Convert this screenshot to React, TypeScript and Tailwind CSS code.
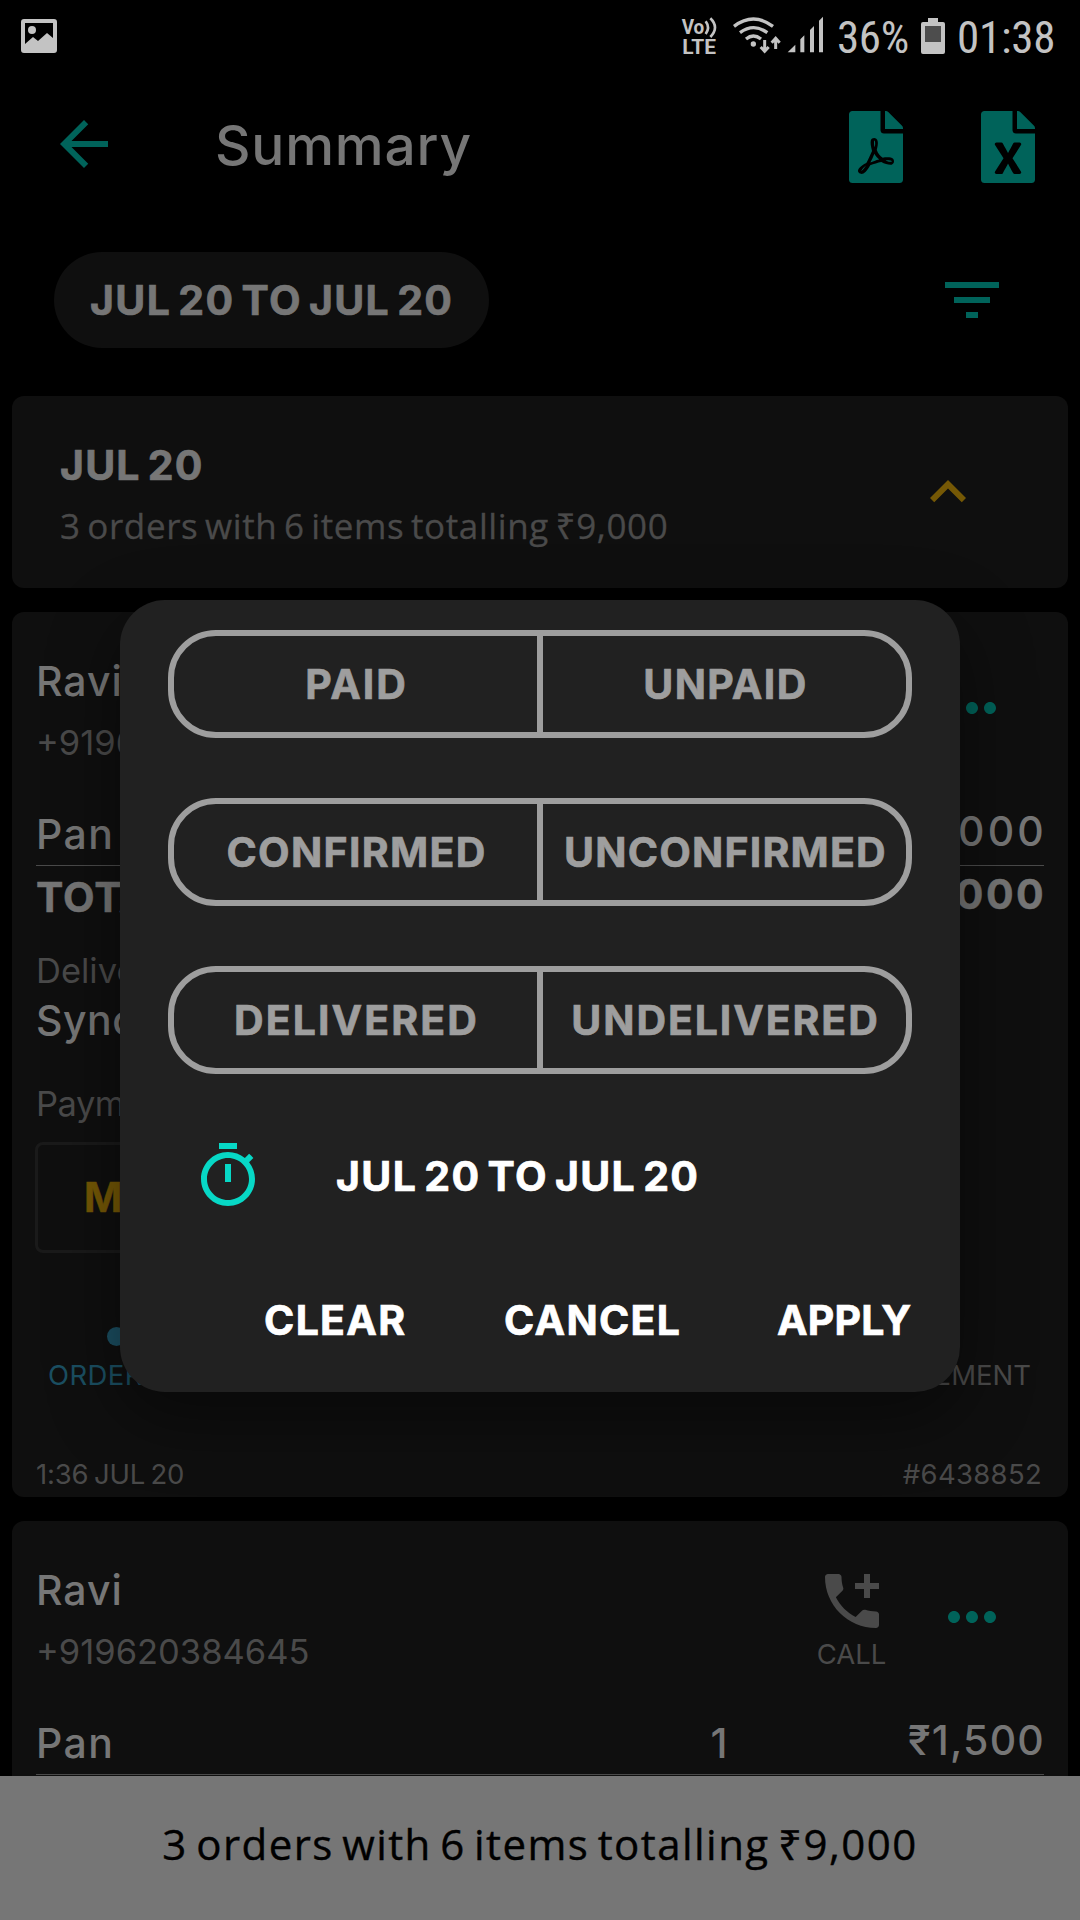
import React from 'react';
import { FaFilePdf, FaFileExcel } from 'react-icons/fa';

function Glyph({ d, className }: { d: string; className: string }) {
  return (
    <svg viewBox="0 0 24 24" className={`size-[72px] shrink-0 fill-current ${className}`}>
      <path d={d} />
    </svg>
  );
}

const icons = {
  back: 'M20 11H7.83l5.59-5.59L12 4l-8 8 8 8 1.41-1.41L7.83 13H20v-2z',
  filter: 'M10 18h4v-2h-4v2zM3 6v2h18V6H3zm3 7h12v-2H6v2z',
  up: 'M12 8l-6 6 1.41 1.41L12 10.83l4.59 4.58L18 14z',
  more: 'M6 10c-1.1 0-2 .9-2 2s.9 2 2 2 2-.9 2-2-.9-2-2-2zm12 0c-1.1 0-2 .9-2 2s.9 2 2 2 2-.9 2-2-.9-2-2-2zm-6 0c-1.1 0-2 .9-2 2s.9 2 2 2 2-.9 2-2-.9-2-2-2z',
  call: 'M20 15.5c-1.25 0-2.45-.2-3.57-.57-.35-.11-.74-.03-1.02.24l-2.2 2.2c-2.83-1.44-5.15-3.75-6.59-6.59l2.2-2.21c.28-.26.36-.65.25-1C8.7 6.45 8.5 5.25 8.5 4c0-.55-.45-1-1-1H4c-.55 0-1 .45-1 1 0 9.39 7.61 17 17 17 .55 0 1-.45 1-1v-3.5c0-.55-.45-1-1-1zM21 6h-3V3h-2v3h-3v2h3v3h2V8h3z',
  timer: 'M15 1H9v2h6V1zm-4 13h2V8h-2v6zm8.03-6.61l1.42-1.42c-.43-.51-.9-.99-1.41-1.41l-1.42 1.42C16.07 4.74 14.12 4 12 4c-4.97 0-9 4.03-9 9s4.02 9 9 9 9-4.03 9-9c0-2.12-.74-4.07-1.97-5.61zM12 20c-3.87 0-7-3.13-7-7s3.13-7 7-7 7 3.13 7 7-3.13 7-7 7z',
};

function StatusBar() {
  return (
    <div className="flex h-[72px] items-start text-[#c3c3c3]">
      <svg viewBox="0 0 36 34" className="mt-[19px] ml-[21px] h-[34px] w-9">
        <path
          fill="currentColor"
          fillRule="evenodd"
          d="M3 0h30a3 3 0 0 1 3 3v28a3 3 0 0 1-3 3H3a3 3 0 0 1-3-3V3a3 3 0 0 1 3-3zM4 4v21l8-7 5 4 9-8 6 5V4z"
        />
        <circle cx="11" cy="11" r="4" fill="currentColor" />
      </svg>
      <svg viewBox="33 18 111 117" className="mt-4 ml-auto h-[39px] w-[37px] font-['Roboto'] font-bold">
        <g fill="currentColor">
          <text x="35" y="71" fontSize="58" textLength="68" lengthAdjust="spacingAndGlyphs">Vo</text>
          <text x="37" y="131" fontSize="61" textLength="101" lengthAdjust="spacingAndGlyphs">LTE</text>
        </g>
        <g fill="none" stroke="currentColor" strokeWidth="8">
          <path d="M107 34q14 19 0 38" />
          <path d="M121 25q28 27 0 56" />
        </g>
      </svg>
      <svg viewBox="186 18 150 114" className="mt-4 ml-3.5 h-[38px] w-[50px]">
        <g fill="none" stroke="currentColor" strokeWidth="10">
          <path d="M192 49q58-44 117 0" />
          <path d="M210 68q41-30 82 0" />
          <path d="M228 87q22-18 45 0" />
          <path d="M284 90v32M272 111l12 13 12-13" strokeWidth="9" />
          <path d="M317 117V86M305 98l12-13 12 13" strokeWidth="9" />
        </g>
        <circle cx="250" cy="102" r="8" fill="currentColor" />
      </svg>
      <svg viewBox="351 20 111 111" className="mt-4 ml-[5px] size-[37px] fill-current">
        <path d="M353 129l23-23v23zM391 129V90l12-12v51zM420 129V62l12-12v79zM447 129V34l12-12v107z" />
      </svg>
      <span className="mt-[11px] ml-[13px] w-[84px] font-['Roboto',sans-serif] text-[45px] leading-[53px] tracking-[-0.4px] whitespace-nowrap [font-stretch:75%]">
        36%
      </span>
      <svg viewBox="0 0 24 36" className="mt-[18px] h-9 w-6">
        <path fill="currentColor" d="M7 0h10v4h5a2 2 0 0 1 2 2v28a2 2 0 0 1-2 2H2a2 2 0 0 1-2-2V6a2 2 0 0 1 2-2h5z" />
        <path fill="#4d4d4d" d="M4 8h16v16H4z" />
      </svg>
      <span className="mt-[11px] ml-3 w-[123px] font-['Roboto',sans-serif] text-[45px] leading-[53px] tracking-[-0.2px] whitespace-nowrap [font-stretch:75%]">
        01:38
      </span>
    </div>
  );
}

function OrderHeader() {
  return (
    <div className="flex h-[106px] items-start">
      <div className="flex-1">
        <div className="text-[41px] leading-[50px] font-medium tracking-[1px] text-[#767676]">Ravi</div>
        <div className="mt-4 text-[34.5px] leading-[42px] text-[#4a4a4a]">+919620384645</div>
      </div>
      <div className="flex w-[72px] flex-col items-center text-[#4a4a4a]">
        <Glyph d={icons.call} className="" />
        <div className="-ml-px text-[27.5px] leading-[34px]">CALL</div>
      </div>
      <Glyph d={icons.more} className="mt-4 mr-[60px] ml-12 text-[#00635a]" />
    </div>
  );
}

function ItemRow({ qty, amount, spacing }: { qty: string; amount: string; spacing: string }) {
  return (
    <div className="mt-[46px] flex h-[50px] text-[41px] leading-[52px] font-medium text-[#767676]">
      <span className="flex-1 tracking-[1.4px]">Pan</span>
      <span className="w-[60px] text-center">{qty}</span>
      <span className={`-mt-[3px] w-[296px] text-right ${spacing}`}>{amount}</span>
    </div>
  );
}

function Segment({ left, right, leftSpacing, rightSpacing }: { left: string; right: string; leftSpacing: string; rightSpacing: string }) {
  return (
    <div className="grid h-[108px] grid-cols-2 rounded-[48px] border-6 border-[#9e9e9e] text-[#9e9e9e]">
      <div className={`flex items-center justify-center border-r-3 border-[#9e9e9e] pl-0.5 ${leftSpacing}`}>{left}</div>
      <div className={`flex items-center justify-center border-l-3 border-[#9e9e9e] pl-0.5 ${rightSpacing}`}>{right}</div>
    </div>
  );
}

function FilterDialog() {
  return (
    <div className="absolute inset-0 flex items-start justify-center pt-[600px]">
      <div className="h-[792px] w-[840px] rounded-[45px] bg-[#212121] px-12 pt-[30px] text-[41px] leading-[50px] font-bold text-white shadow-[0_24px_72px_rgba(0,0,0,0.45)] [-webkit-text-stroke:0.7px]">
        <div className="flex flex-col gap-[60px]">
          <Segment left="PAID" right="UNPAID" leftSpacing="tracking-[1.9px]" rightSpacing="tracking-[1.4px]" />
          <Segment left="CONFIRMED" right="UNCONFIRMED" leftSpacing="tracking-[1.3px]" rightSpacing="tracking-[1.2px]" />
          <Segment left="DELIVERED" right="UNDELIVERED" leftSpacing="tracking-[2.1px]" rightSpacing="tracking-[1.9px]" />
        </div>
        <div className="mt-[66px] flex items-center pl-6">
          <Glyph d={icons.timer} className="text-[#07d8c6]" />
          <span className="ml-[72px] tracking-[1.35px] [word-spacing:-4px]">JUL 20 TO JUL 20</span>
        </div>
        <div className="mt-[83px] flex pl-24">
          <span className="w-60 tracking-[1.3px]">CLEAR</span>
          <span className="w-[273px] tracking-[1.3px]">CANCEL</span>
          <span className="tracking-[0.2px]">APPLY</span>
        </div>
      </div>
    </div>
  );
}

export default function App() {
  return (
    <div className="relative flex h-[1920px] w-[1080px] flex-col overflow-hidden bg-black font-['Inter','Noto_Sans',sans-serif]">
      <StatusBar />

      <header className="flex h-36 items-center pl-12">
        <Glyph d={icons.back} className="text-[#00635a]" />
        <h1 className="ml-[95px] flex-1 pt-px text-[55px] leading-[66px] font-medium tracking-[0.8px] text-[#767676]">Summary</h1>
        <div className="mt-1.5 mr-[45px] flex gap-[78px] text-[#00635a]">
          <FaFilePdf className="h-[72px] w-[54px]" />
          <FaFileExcel className="h-[72px] w-[54px]" />
        </div>
      </header>

      <div className="flex h-[168px] items-center justify-between pr-[72px] pl-[54px]">
        <div className="flex h-24 w-[435px] items-center rounded-[48px] bg-[#0f0f0f] pt-px pl-9 text-[41px] font-bold tracking-[1.35px] whitespace-nowrap text-[#767676] [-webkit-text-stroke:0.7px] [word-spacing:-4px]">
          JUL 20 TO JUL 20
        </div>
        <Glyph d={icons.filter} className="text-[#00635a]" />
      </div>

      <main className="flex flex-1 flex-col gap-6 overflow-hidden px-3 pt-3">
        <section className="flex h-48 shrink-0 items-center justify-between rounded-xl bg-[#0f0f0f] pr-[84px] pl-12">
          <div className="mt-[3px]">
            <div className="text-[41px] leading-[50px] font-bold tracking-[1.2px] text-[#767676] [-webkit-text-stroke:0.7px] [word-spacing:-4px]">JUL 20</div>
            <div className="mt-[15px] font-['Open_Sans','Noto_Sans',sans-serif] text-[35px] leading-[42px] tracking-[0.6px] text-[#4a4a4a] [-webkit-text-stroke:0.3px] [word-spacing:-3px]">
              3 orders with 6 items totalling ₹9,000
            </div>
          </div>
          <Glyph d={icons.up} className="text-[#755805]" />
        </section>

        <section className="h-[885px] shrink-0 rounded-xl bg-[#0f0f0f] pt-11 pl-6">
          <OrderHeader />
          <ItemRow qty="4" amount="₹6,000" spacing="mr-[21px] tracking-[3.2px]" />
          <div className="mt-[7px] mr-6 h-px bg-[#4a4a4a]" />
          <div className="mt-[5px] flex h-[50px] justify-between text-[41px] leading-[52px] font-bold text-[#767676] [-webkit-text-stroke:0.5px]">
            <span className="tracking-[1px]">TOTAL</span>
            <span className="-mt-[3px] mr-[22px] tracking-[2.4px]">₹6,000</span>
          </div>
          <div className="mt-[29px] text-[34.5px] leading-[42px] text-[#4a4a4a]">Delivery</div>
          <div className="mt-[3px] text-[41px] leading-[50px] font-medium tracking-[0.5px] text-[#767676]">Sync</div>
          <div className="mt-[38px] text-[34.5px] leading-[42px] tracking-[-0.5px] text-[#4a4a4a]">Payment</div>
          <div className="mt-[17px] -ml-px flex h-[111px] w-[360px] items-center rounded-lg border-3 border-[#1a1a1a] pl-[46px] text-[41px] font-bold text-[#755805] [-webkit-text-stroke:0.5px]">
            MARK PAID
          </div>
          <div className="mt-[74px] ml-[71px] size-[19px] rounded-full bg-[#1b4f62]" />
          <div className="mt-[12px] flex h-[34px] justify-between pr-[37px] pl-[12px] text-[27.5px] leading-[34px] text-[#4a4a4a]">
            <span className="tracking-[0.4px] text-[#1b4f62]">ORDERED</span>
            <span>SETTLEMENT</span>
          </div>
          <div className="mt-[65px] flex justify-between pr-[26px] text-[27.5px] leading-[34px] text-[#4a4a4a]">
            <span className="tracking-[-0.2px] [word-spacing:-2px]">1:36 JUL 20</span>
            <span className="tracking-[0.3px]">#6438852</span>
          </div>
        </section>

        <section className="flex-1 rounded-t-xl bg-[#0f0f0f] pt-11 pl-6">
          <OrderHeader />
          <ItemRow qty="1" amount="₹1,500" spacing="mr-[23px] tracking-[1.2px]" />
          <div className="mt-[7px] mr-6 h-px bg-[#4a4a4a]" />
        </section>
      </main>

      <footer className="flex h-36 shrink-0 justify-center bg-[#767676] pt-[43px] font-['Open_Sans','Noto_Sans',sans-serif] text-[42px] leading-[50px] tracking-[1.45px] text-black [-webkit-text-stroke:0.4px] [word-spacing:-4px]">
        3 orders with 6 items totalling ₹9,000
      </footer>

      <FilterDialog />
    </div>
  );
}
